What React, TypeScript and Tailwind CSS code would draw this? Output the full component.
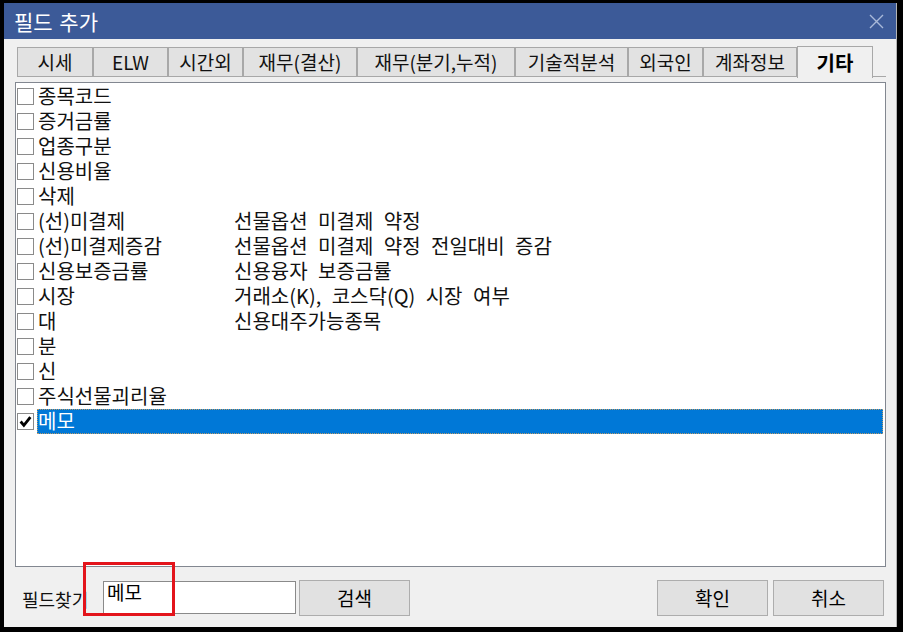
const font = { fontFamily: '"Noto Sans CJK KR", "Noto Sans", sans-serif' };

const tabs = [
  { label: '시세', w: 'w-[76px]' },
  { label: 'ELW', w: 'w-[75px]' },
  { label: '시간외', w: 'w-[75px]' },
  { label: '재무(결산)', w: 'w-[114px]' },
  { label: '재무(분기,누적)', w: 'w-[158px]' },
  { label: '기술적분석', w: 'w-[113px]' },
  { label: '외국인', w: 'w-[75px]' },
  { label: '계좌정보', w: 'w-[94px]' },
];

const fields: { name: string; desc?: string; checked?: boolean }[] = [
  { name: '종목코드' },
  { name: '증거금률' },
  { name: '업종구분' },
  { name: '신용비율' },
  { name: '삭제' },
  { name: '(선)미결제', desc: '선물옵션 미결제 약정' },
  { name: '(선)미결제증감', desc: '선물옵션 미결제 약정 전일대비 증감' },
  { name: '신용보증금률', desc: '신용융자 보증금률' },
  { name: '시장', desc: '거래소(K), 코스닥(Q) 시장 여부' },
  { name: '대', desc: '신용대주가능종목' },
  { name: '분' },
  { name: '신' },
  { name: '주식선물괴리율' },
  { name: '메모', checked: true },
];

function CheckBox({ checked }: { checked?: boolean }) {
  return (
    <div className="flex h-[17px] w-[17px] shrink-0 items-center justify-center border border-[#8a8a8a] bg-white">
      {checked && (
        <svg width="13" height="13" viewBox="0 0 12 12">
          <path d="M1.5 6 L4.5 9.5 L10.5 2" fill="none" stroke="#000" strokeWidth="2.6" />
        </svg>
      )}
    </div>
  );
}

function Button({ label, className }: { label: string; className: string }) {
  return (
    <button
      className={`flex h-[36px] items-center justify-center border border-[#adadad] bg-[#e1e1e1] text-[19px] text-black ${className}`}
    >
      {label}
    </button>
  );
}

export default function App() {
  return (
    <div className="h-[632px] w-[903px] bg-black pb-[5px] pl-[4px] pr-[6px] pt-[3px]" style={font}>
      <div className="flex h-full flex-col border-r border-[#b5b5b5] bg-[#f0f0f0]">
        {/* title bar */}
        <div className="flex h-[36px] shrink-0 items-center justify-between bg-[#3c5a98] pl-[10px] pr-[12px]">
          <span className="text-[21px] leading-none text-white [word-spacing:2px]">필드 추가</span>
          <svg width="15" height="15" viewBox="0 0 15 15">
            <path d="M1 1 L14 14 M14 1 L1 14" stroke="#a9b9d9" strokeWidth="1.4" />
          </svg>
        </div>

        {/* tab strip */}
        <div className="ml-[13px] mt-[7px] flex items-end">
          {tabs.map((t) => (
            <div
              key={t.label}
              className={`flex h-[30px] items-center justify-center border border-[#a8a8a8] bg-[#e2e2e2] text-[19px] text-[#111] ${t.w}`}
            >
              {t.label}
            </div>
          ))}
          <div className="-mb-px flex h-[32px] w-[76px] items-center justify-center border border-b-0 border-[#a8a8a8] bg-[#f0f0f0] text-[20px] font-bold text-black">
            기타
          </div>
          <div className="h-[30px] w-[13px] border-b border-[#a8a8a8]" />
        </div>

        {/* field list */}
        <div className="ml-[11px] mt-[5px] h-[485px] w-[871px] border border-[#828790] bg-white pt-px">
          {fields.map((f) => (
            <div key={f.name} className="flex h-[25px] items-center pl-px pr-[2px]">
              <CheckBox checked={f.checked} />
              <div
                className={`ml-[3px] flex h-full flex-1 items-center pb-[2px] pl-px text-[20px] leading-none [word-spacing:6px] ${
                  f.checked ? 'bg-[#0078d7] text-white outline-1 -outline-offset-1 outline-dotted outline-[#b89a6a]' : 'text-[#111]'
                }`}
              >
                <span className="w-[196px] shrink-0">{f.name}</span>
                {f.desc && <span>{f.desc}</span>}
              </div>
            </div>
          ))}
        </div>

        {/* search row and dialog buttons */}
        <div className="mt-[13px] flex items-start">
          <span className="ml-[18px] mt-[6px] w-[81px] text-[18px] text-[#111]">필드찾기</span>
          <div className="relative mt-px h-[33px] w-[193px] border border-[#8a8a8a] bg-white">
            <span className="absolute left-[3px] top-0 text-[19px] leading-none text-black">메모</span>
          </div>
          <Button label="검색" className="ml-[3px] w-[111px]" />
          <div className="flex-1" />
          <Button label="확인" className="w-[111px]" />
          <Button label="취소" className="ml-[5px] mr-[12px] w-[111px]" />
        </div>
      </div>

      {/* red highlight box around the search input */}
      <div className="pointer-events-none absolute left-[83px] top-[562px] h-[54px] w-[92px] border-[3px] border-[#e3141b]" />
    </div>
  );
}
